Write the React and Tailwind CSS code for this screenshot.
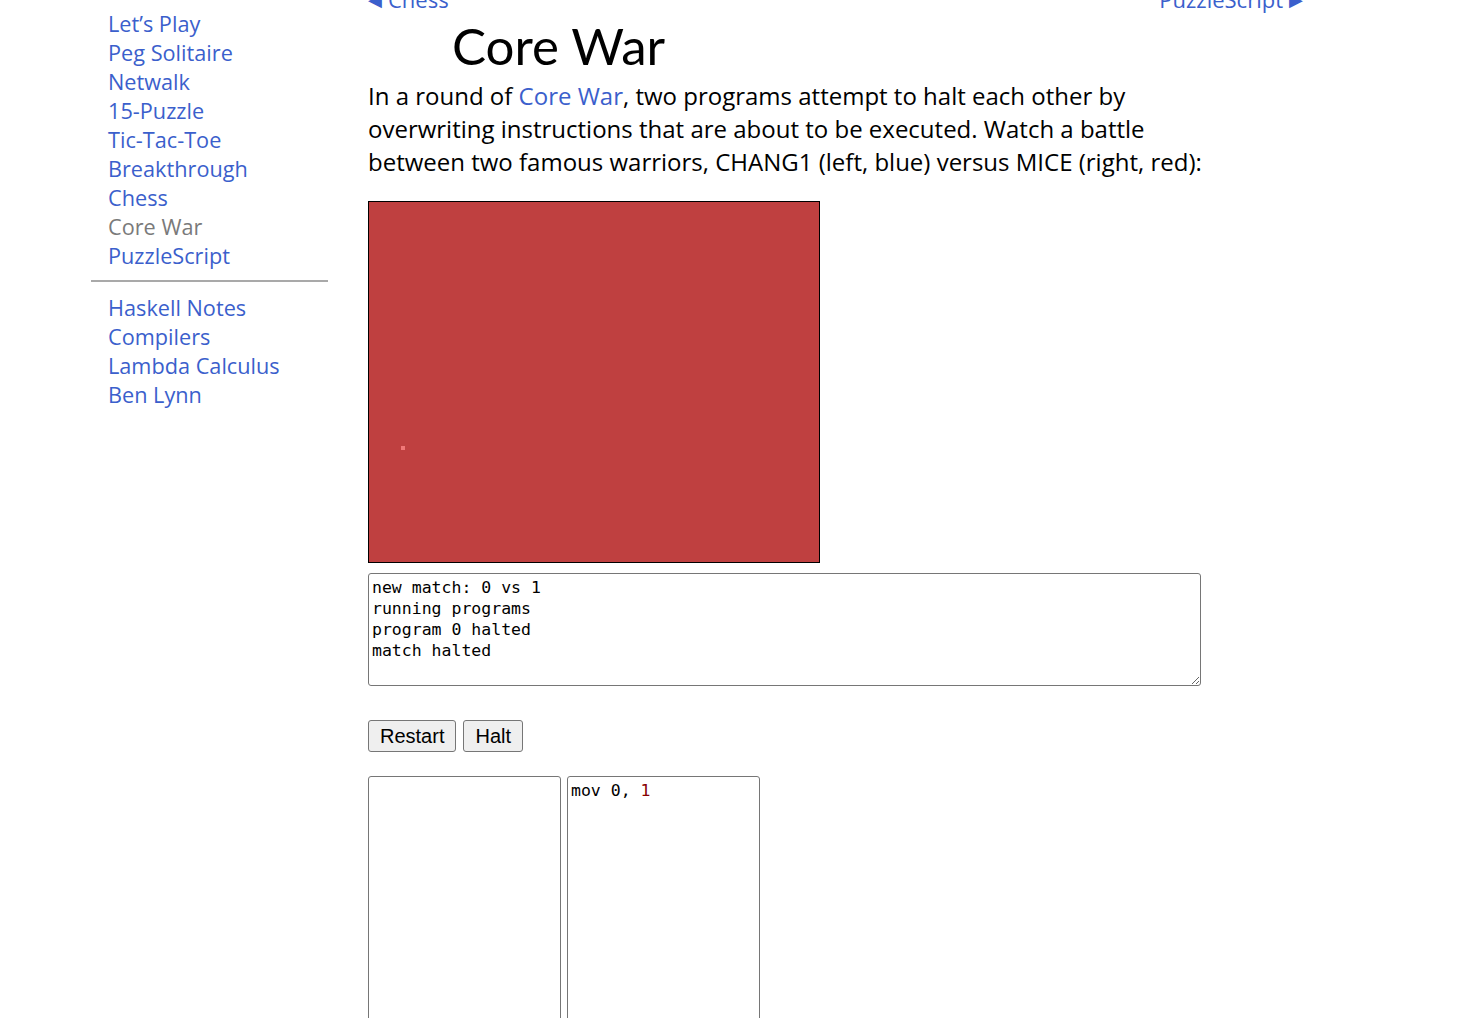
// Core War page
const sideTop = ["Let’s Play", "Peg Solitaire", "Netwalk", "15-Puzzle", "Tic-Tac-Toe", "Breakthrough", "Chess", "Core War", "PuzzleScript"];
const sideBottom = ["Haskell Notes", "Compilers", "Lambda Calculus", "Ben Lynn"];

function SideLink({ label }) {
    // current page is greyed out
    const grey = label === "Core War";
    return (
        <a href="#" className={grey ? "block text-[#7a7a7a]" : "block text-[#3b5fcc]"}>
            {label}
        </a>
    );
}

export default function App() {
    return (
        <div className="flex bg-white min-h-[1018px] overflow-hidden text-black" style={{ fontFamily: "'Open Sans', sans-serif" }}>
            {/* Sidebar */}
            <div className="w-[237px] ml-[91px] pt-[9px] shrink-0">
                <div className="pl-[17px] text-[21.7px] leading-[29px]">
                    {sideTop.map((l) => <SideLink key={l} label={l} />)}
                </div>
                <hr className="border-0 border-t-2 border-[#a9a9a9] mt-[10px] mb-[11px]" />
                <div className="pl-[17px] text-[21.7px] leading-[29px]">
                    {sideBottom.map((l) => <SideLink key={l} label={l} />)}
                </div>
            </div>

            {/* Main */}
            <div className="ml-[40px] w-[935px] -mt-[15px]">
                <div className="flex justify-between text-[22px] leading-[28px] text-[#3b5fcc]">
                    <a href="#" className="flex items-center gap-[6px]"><span className="text-[18px]">◀</span>Chess</a>
                    <a href="#" className="flex items-center gap-[6px]">PuzzleScript<span className="text-[18px]">▶</span></a>
                </div>
                <h1 className="pl-[84px] mt-[2px] text-[51px] leading-[62px] font-normal" style={{ fontFamily: "Lato, sans-serif" }}>
                    Core War
                </h1>
                <p className="w-[845px] text-[24px] leading-[33px] mt-[2px]">
                    In a round of <a href="#" className="text-[#3b5fcc]">Core War</a>, two programs attempt to halt each other by overwriting instructions that are about to be executed. Watch a battle between two famous warriors, CHANG1 (left, blue) versus MICE (right, red):
                </p>

                {/* Core display */}
                <div className="mt-[23px] w-[452px] h-[362px] border border-black bg-[#bf4040] relative">
                    <div className="absolute left-[32px] top-[244px] w-[4px] h-[4px] bg-[#f07878]"></div>
                </div>

                {/* Log */}
                <textarea
                    readOnly
                    className="block mt-[10px] w-[833px] h-[113px] border border-[#767676] rounded-[3px] px-[3px] py-[3px] text-[16.5px] leading-[21px] resize"
                    style={{ fontFamily: "'DejaVu Sans Mono', monospace" }}
                    value={"new match: 0 vs 1\nrunning programs\nprogram 0 halted\nmatch halted"}
                />

                {/* Controls */}
                <div className="flex gap-[7px] mt-[34px]" style={{ fontFamily: "'Liberation Sans', Arial, sans-serif" }}>
                    <button className="h-[32px] px-[11px] bg-[#efefef] border border-[#767676] rounded-[3px] text-[20px]">Restart</button>
                    <button className="h-[32px] px-[11px] bg-[#efefef] border border-[#767676] rounded-[3px] text-[20px]">Halt</button>
                </div>

                {/* Programs */}
                <div className="flex gap-[6px] mt-[24px]" style={{ fontFamily: "'DejaVu Sans Mono', monospace" }}>
                    <div className="w-[193px] h-[260px] border border-[#767676] rounded-[3px]"></div>
                    <div className="w-[193px] h-[260px] border border-[#767676] rounded-[3px] px-[3px] py-[3px] text-[16.5px] leading-[21px]">
                        <span>mov </span><span>0</span><span>, </span><span className="text-[#880000]">1</span>
                    </div>
                </div>
            </div>
        </div>
    );
}
